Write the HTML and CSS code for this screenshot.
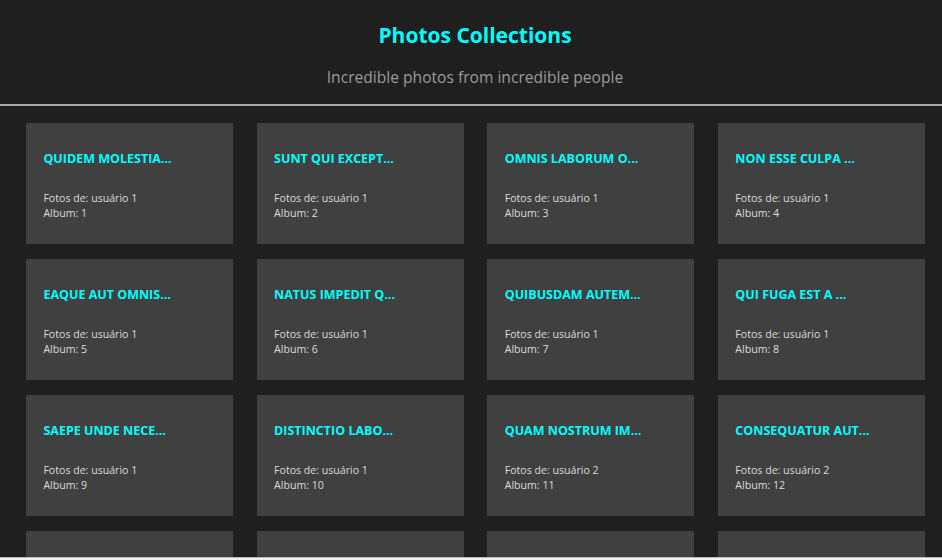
FILE: index.html
```html
<!DOCTYPE html>
<html lang="pt">
<head>
<meta charset="utf-8">
<title>Photos Collections</title>
<link rel="stylesheet" href="styles.css">
</head>
<body>
<header class="header">
  <h1 class="title">Photos Collections</h1>
  <p class="subtitle">Incredible photos from incredible people</p>
</header>
<main class="grid">
  <div class="card"><h3 class="card-title">QUIDEM MOLESTIA...</h3><p class="card-text">Fotos de: usuário 1</p><p class="card-text">Album: 1</p></div>
  <div class="card"><h3 class="card-title">SUNT QUI EXCEPT...</h3><p class="card-text">Fotos de: usuário 1</p><p class="card-text">Album: 2</p></div>
  <div class="card"><h3 class="card-title">OMNIS LABORUM O...</h3><p class="card-text">Fotos de: usuário 1</p><p class="card-text">Album: 3</p></div>
  <div class="card"><h3 class="card-title">NON ESSE CULPA ...</h3><p class="card-text">Fotos de: usuário 1</p><p class="card-text">Album: 4</p></div>
  <div class="card"><h3 class="card-title">EAQUE AUT OMNIS...</h3><p class="card-text">Fotos de: usuário 1</p><p class="card-text">Album: 5</p></div>
  <div class="card"><h3 class="card-title">NATUS IMPEDIT Q...</h3><p class="card-text">Fotos de: usuário 1</p><p class="card-text">Album: 6</p></div>
  <div class="card"><h3 class="card-title">QUIBUSDAM AUTEM...</h3><p class="card-text">Fotos de: usuário 1</p><p class="card-text">Album: 7</p></div>
  <div class="card"><h3 class="card-title">QUI FUGA EST A ...</h3><p class="card-text">Fotos de: usuário 1</p><p class="card-text">Album: 8</p></div>
  <div class="card"><h3 class="card-title">SAEPE UNDE NECE...</h3><p class="card-text">Fotos de: usuário 1</p><p class="card-text">Album: 9</p></div>
  <div class="card"><h3 class="card-title">DISTINCTIO LABO...</h3><p class="card-text">Fotos de: usuário 1</p><p class="card-text">Album: 10</p></div>
  <div class="card"><h3 class="card-title">QUAM NOSTRUM IM...</h3><p class="card-text">Fotos de: usuário 2</p><p class="card-text">Album: 11</p></div>
  <div class="card"><h3 class="card-title">CONSEQUATUR AUT...</h3><p class="card-text">Fotos de: usuário 2</p><p class="card-text">Album: 12</p></div>
  <div class="card"></div>
  <div class="card"></div>
  <div class="card"></div>
  <div class="card"></div>
</main>
<div class="frame-bottom"></div>
</body>
</html>
```

FILE: styles.css
```css
* { box-sizing: border-box; }
html, body { margin: 0; padding: 0; }
body {
  background: #1f1f1f;
  font-family: "Open Sans", "Noto Sans", sans-serif;
  overflow: hidden;
}
.header {
  text-align: center;
  height: 106px;
  padding: 20px 0 0 8px;
  border-bottom: 2px solid #a9a9a9;
}
.title {
  margin: 0;
  color: #00ffff;
  font-size: 21px;
  line-height: 30px;
  font-weight: 700;
}
.subtitle {
  margin: 16px 0 0;
  color: #9a9a9a;
  font-size: 15.6px;
  line-height: 22px;
}
.grid {
  display: grid;
  grid-template-columns: repeat(4, 207px);
  column-gap: 23.67px;
  row-gap: 15px;
  padding: 17px 17px 0 26px;
}
.card {
  background: #404040;
  height: 121px;
  padding: 27px 17px 0 17.4px;
}
.card-title {
  margin: 0 0 23px;
  color: #00ffff;
  font-size: 12.5px;
  line-height: 18px;
  font-weight: 700;
  white-space: nowrap;
}
.card-text {
  margin: 0;
  color: #dcdcdc;
  font-size: 10.6px;
  line-height: 15px;
}
.frame-bottom {
  position: fixed;
  left: 0;
  right: 0;
  bottom: 0;
  height: 3px;
  background: #f2f2f2;
  border-top: 1px solid #bcbcbc;
}
```
